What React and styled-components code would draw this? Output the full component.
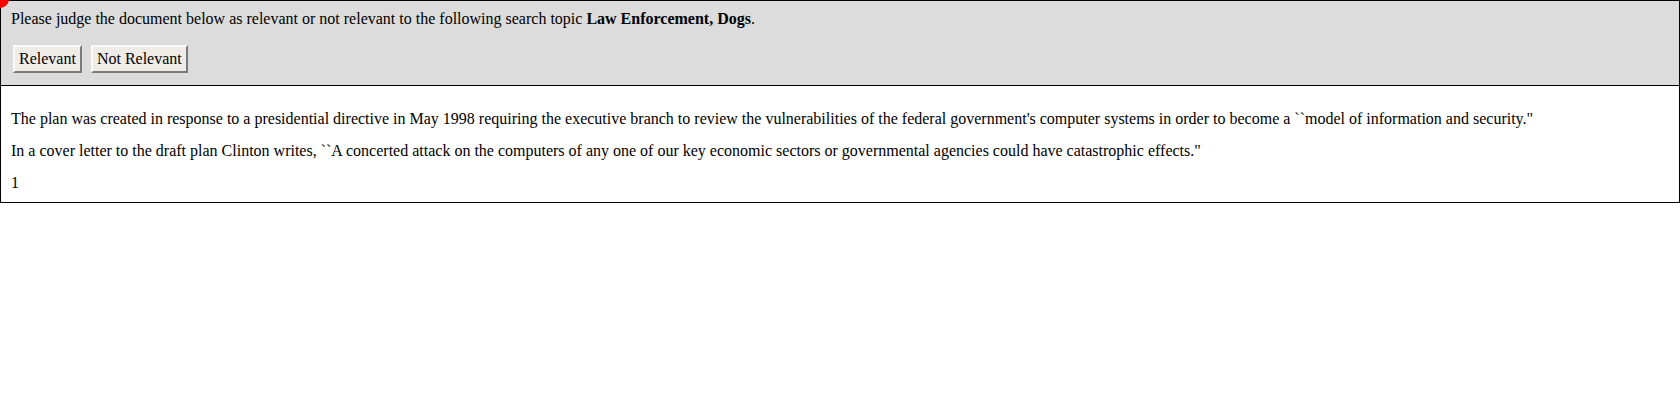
import React from 'react';
import styled, { createGlobalStyle } from 'styled-components';

const GlobalStyle = createGlobalStyle`
  html, body {
    margin: 0;
    padding: 0;
    background: #ffffff;
  }
  body {
    font-family: 'Liberation Serif', 'Times New Roman', serif;
    font-size: 16px;
    color: #000;
  }
`;

export default function App() {
  return (
    <Page>
      <GlobalStyle />
      <Marker />
      <JudgePanel>
        <Prompt>
          Please judge the document below as relevant or not relevant to the following search topic{' '}
          <b>Law Enforcement, Dogs</b>.
        </Prompt>
        <ButtonRow>
          <JudgeButton type="button">Relevant</JudgeButton>
          <JudgeButton type="button">Not Relevant</JudgeButton>
        </ButtonRow>
      </JudgePanel>
      <DocumentPanel>
        <Para>
          The plan was created in response to a presidential directive in May 1998 requiring the executive branch to review the vulnerabilities of the federal government's computer systems in order to become a ``model of information and security."
        </Para>
        <Para>
          In a cover letter to the draft plan Clinton writes, ``A concerted attack on the computers of any one of our key economic sectors or governmental agencies could have catastrophic effects."
        </Para>
        <Para>1</Para>
      </DocumentPanel>
    </Page>
  );
}

const Page = styled.div`
  position: relative;
  width: 100%;
  display: flex;
  flex-direction: column;
`;

// red dot sitting over the top-left corner
const Marker = styled.div`
  position: absolute;
  top: -10px;
  left: -9px;
  width: 18px;
  height: 18px;
  border-radius: 50%;
  background: #ff0000;
  z-index: 2;
`;

const JudgePanel = styled.div`
  background: #dcdcdc;
  border: 1px solid #000;
  padding: 8px 10px 12px 10px;
  display: flex;
  flex-direction: column;
  gap: 17px;
`;

const Prompt = styled.div`
  line-height: 19px;
`;

const ButtonRow = styled.div`
  display: flex;
  gap: 9px;
  padding-left: 2px;
`;

const JudgeButton = styled.button`
  font-family: 'Liberation Serif', 'Times New Roman', serif;
  font-size: 16px;
  line-height: 18px;
  padding: 3px 4px;
  background: #efece8;
  color: #000;
  border: 2px solid;
  border-color: #fbfaf8 #7a7a7a #7a7a7a #fbfaf8;
  border-radius: 0;
  cursor: pointer;
`;

const DocumentPanel = styled.div`
  background: #fff;
  border: 1px solid #000;
  border-top: none;
  padding: 24px 10px 10px 10px;
  display: flex;
  flex-direction: column;
  gap: 14px;
`;

const Para = styled.p`
  margin: 0;
  line-height: 18px;
`;
